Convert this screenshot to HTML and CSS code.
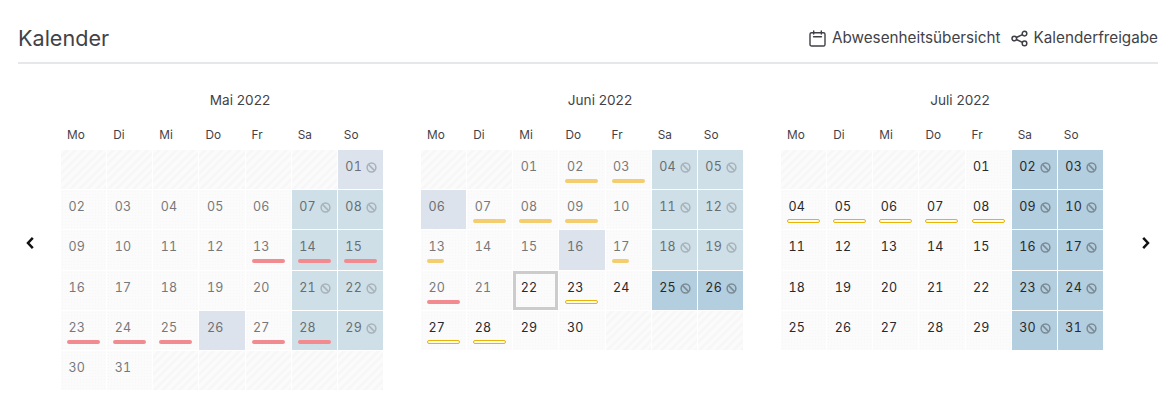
FILE: index.html
```html
<!DOCTYPE html>
<html lang="de">
<head>
<meta charset="utf-8">
<title>Kalender</title>
<link rel="stylesheet" href="styles.css">
</head>
<body>
<svg class="defs" width="0" height="0" aria-hidden="true"><defs><symbol id="ban" viewBox="0 0 11 11"><circle cx="5.5" cy="5.5" r="4.4" fill="none" stroke="currentColor" stroke-width="1.5"/><path d="M2.4 2.4l6.2 6.2" fill="none" stroke="currentColor" stroke-width="1.5"/></symbol></defs></svg>
<header class="top">
  <h1 class="title">Kalender</h1>
  <nav class="actions">
    <a class="action"><svg class="ico" viewBox="0 0 17 17" fill="none" stroke="currentColor" stroke-width="1.4" stroke-linecap="round" stroke-linejoin="round"><rect x="1" y="2.7" width="15" height="13.3" rx="1.6"/><path d="M4.5 6.7h8M4.7 1v3M12.3 1v3"/></svg><span class="soft">Abwesenheitsübersicht</span></a>
    <a class="action"><svg class="ico" viewBox="0 0 17 17" fill="none" stroke="currentColor" stroke-width="1.5"><circle cx="3.3" cy="8.5" r="2.3"/><circle cx="13.5" cy="3.6" r="2.3"/><circle cx="13.5" cy="13.4" r="2.3"/><path d="M5.4 7.5l6-2.9M5.4 9.5l6 2.9"/></svg><span class="soft">Kalenderfreigabe</span></a>
  </nav>
</header>
<main class="cal">
  <button class="nav prev"><svg viewBox="0 0 10 14" width="10" height="14" fill="none" stroke="currentColor" stroke-width="2.5"><path d="M7.8 1.8L3 7l4.8 5.2"/></svg></button>
  <div class="months" id="months"></div>
  <button class="nav"><svg viewBox="0 0 10 14" width="10" height="14" fill="none" stroke="currentColor" stroke-width="2.5"><path d="M2.2 1.8L7 7l-4.8 5.2"/></svg></button>
</main>
<script src="app.js"></script>
</body>
</html>
```
FILE: styles.css
```css
* { box-sizing: border-box; }
html, body { margin: 0; padding: 0; }
body { width: 1172px; height: 418px; overflow: hidden; background: #fff; color: #3f3f46; font-family: Inter, "Liberation Sans", sans-serif; }
.defs { position: absolute; }
.soft { opacity: .99; }
.top { margin: 0 14px 0 18px; height: 64px; padding-top: 22px; border-bottom: 2px solid #e5e7eb; display: flex; justify-content: space-between; align-items: flex-start; }
.title { margin: 0; font-size: 21.6px; line-height: 32px; font-weight: 400; color: #3f3f46; opacity: .99; }
.actions { display: flex; gap: 10px; padding-top: 6px; }
.action { display: flex; align-items: center; gap: 6px; font-size: 15.25px; line-height: 20px; font-weight: 400; color: #3f3f46; }
.ico { width: 17px; height: 17px; }
.cal { display: flex; align-items: flex-start; }
.nav { flex: none; width: 10px; height: 20px; margin-top: 169px; padding: 0; border: 0; background: none; color: #111; display: flex; justify-content: center; align-items: center; }
.prev { margin-left: 25px; margin-right: 26px; }
.months { display: flex; gap: 2px; width: 1080px; }
.month { width: 358px; }
.mname { margin: 0; padding-top: 26px; height: 63px; font-size: 13.6px; line-height: 20px; font-weight: 400; text-align: center; color: #3f3f46; opacity: .99; }
.wds { display: grid; grid-template-columns: repeat(7, 1fr); gap: 1px; width: 322px; height: 23px; }
.wd { font-size: 11.8px; line-height: 16px; padding-left: 6px; color: #3f3f46; opacity: .99; }
.grid { display: grid; width: 322px; grid-template-columns: repeat(7, 1fr); grid-auto-rows: 39.2px; gap: 1px; }
.c { position: relative; padding: 8px 0 0 7.5px; font-size: 12.5px; line-height: 18px; letter-spacing: .2px; font-variant-numeric: tabular-nums; background-color: #fbfbfb; background-image: radial-gradient(#f7f7f7 .6px, transparent .7px); background-size: 3px 3px; color: #27272a; display: flex; gap: 4.5px; }
.num { opacity: .99; }
.past .num { opacity: .62; }
.empty { background-color: #f9f9f9; background-size: auto; background-image: repeating-linear-gradient(135deg, #fbfbfb 0 3px, #f7f7f7 3px 6px); }
.off { background-color: #b3cedf; background-image: none; }
.past.off { background-color: #cfdfe7; background-image: none; }
.hol, .past.hol { background-color: #dde3ec; background-image: none; }
.today { box-shadow: inset 0 0 0 3px #ccc; }
.b { width: 11px; height: 11px; margin-top: 4px; color: #7b8a94; }
.past .b { color: #a7b2b9; }
.bar { position: absolute; left: 6px; top: 29px; width: 33px; height: 4px; border-radius: 2px; }
.red { background: #f28b8f; }
.amber { background: #f3cd6e; }
.out { background: #fffbe6; border: 1px solid #eab308; }
```
FILE: app.js
```js
var D = [
  { n: "Mai 2022", lead: 6, days: 31, past: 31, off: [1,7,8,14,15,21,22,28,29], ban: [1,7,8,21,22,29], hol: [1,26],
    red: [13,14,15,23,24,25,27,28], amber: [], out: [], short: {} },
  { n: "Juni 2022", lead: 2, days: 30, past: 21, off: [4,5,11,12,18,19,25,26], ban: [4,5,11,12,18,19,25,26], hol: [6,16],
    red: [20], amber: [2,3,7,8,9,13,17], out: [23,27,28], short: {13:1,17:1} },
  { n: "Juli 2022", lead: 4, days: 31, past: 0, off: [2,3,9,10,16,17,23,24,30,31], ban: [2,3,9,10,16,17,23,24,30,31], hol: [],
    red: [], amber: [], out: [4,5,6,7,8], short: {} }
];
var WD = ["Mo","Di","Mi","Do","Fr","Sa","So"];
var root = document.getElementById("months");
D.forEach(function (m) {
  var h = '<section class="month"><h2 class="mname">' + m.n + '</h2><div class="wds">';
  WD.forEach(function (w) { h += '<div class="wd">' + w + '</div>'; });
  h += '</div><div class="grid">';
  var i, total = m.lead + m.days, cells = Math.ceil(total / 7) * 7;
  for (i = 0; i < cells; i++) {
    var d = i - m.lead + 1;
    if (d < 1 || d > m.days) { h += '<div class="c empty"></div>'; continue; }
    var cls = "c";
    if (d <= m.past) cls += " past";
    if (m.off.indexOf(d) >= 0) cls += " off";
    if (m.hol.indexOf(d) >= 0) cls += " hol";
    if (m.n === "Juni 2022" && d === 22) cls += " today";
    h += '<div class="' + cls + '"><span class="num">' + (d < 10 ? "0" + d : d) + '</span>';
    if (m.ban.indexOf(d) >= 0) h += '<svg class="b"><use href="#ban"/></svg>';
    if (m.red.indexOf(d) >= 0) h += '<i class="bar red"></i>';
    if (m.amber.indexOf(d) >= 0) h += '<i class="bar amber"' + (m.short[d] ? ' style="width:17px"' : '') + '></i>';
    if (m.out.indexOf(d) >= 0) h += '<i class="bar out"></i>';
    h += '</div>';
  }
  root.innerHTML += h + '</div></section>';
});
```
